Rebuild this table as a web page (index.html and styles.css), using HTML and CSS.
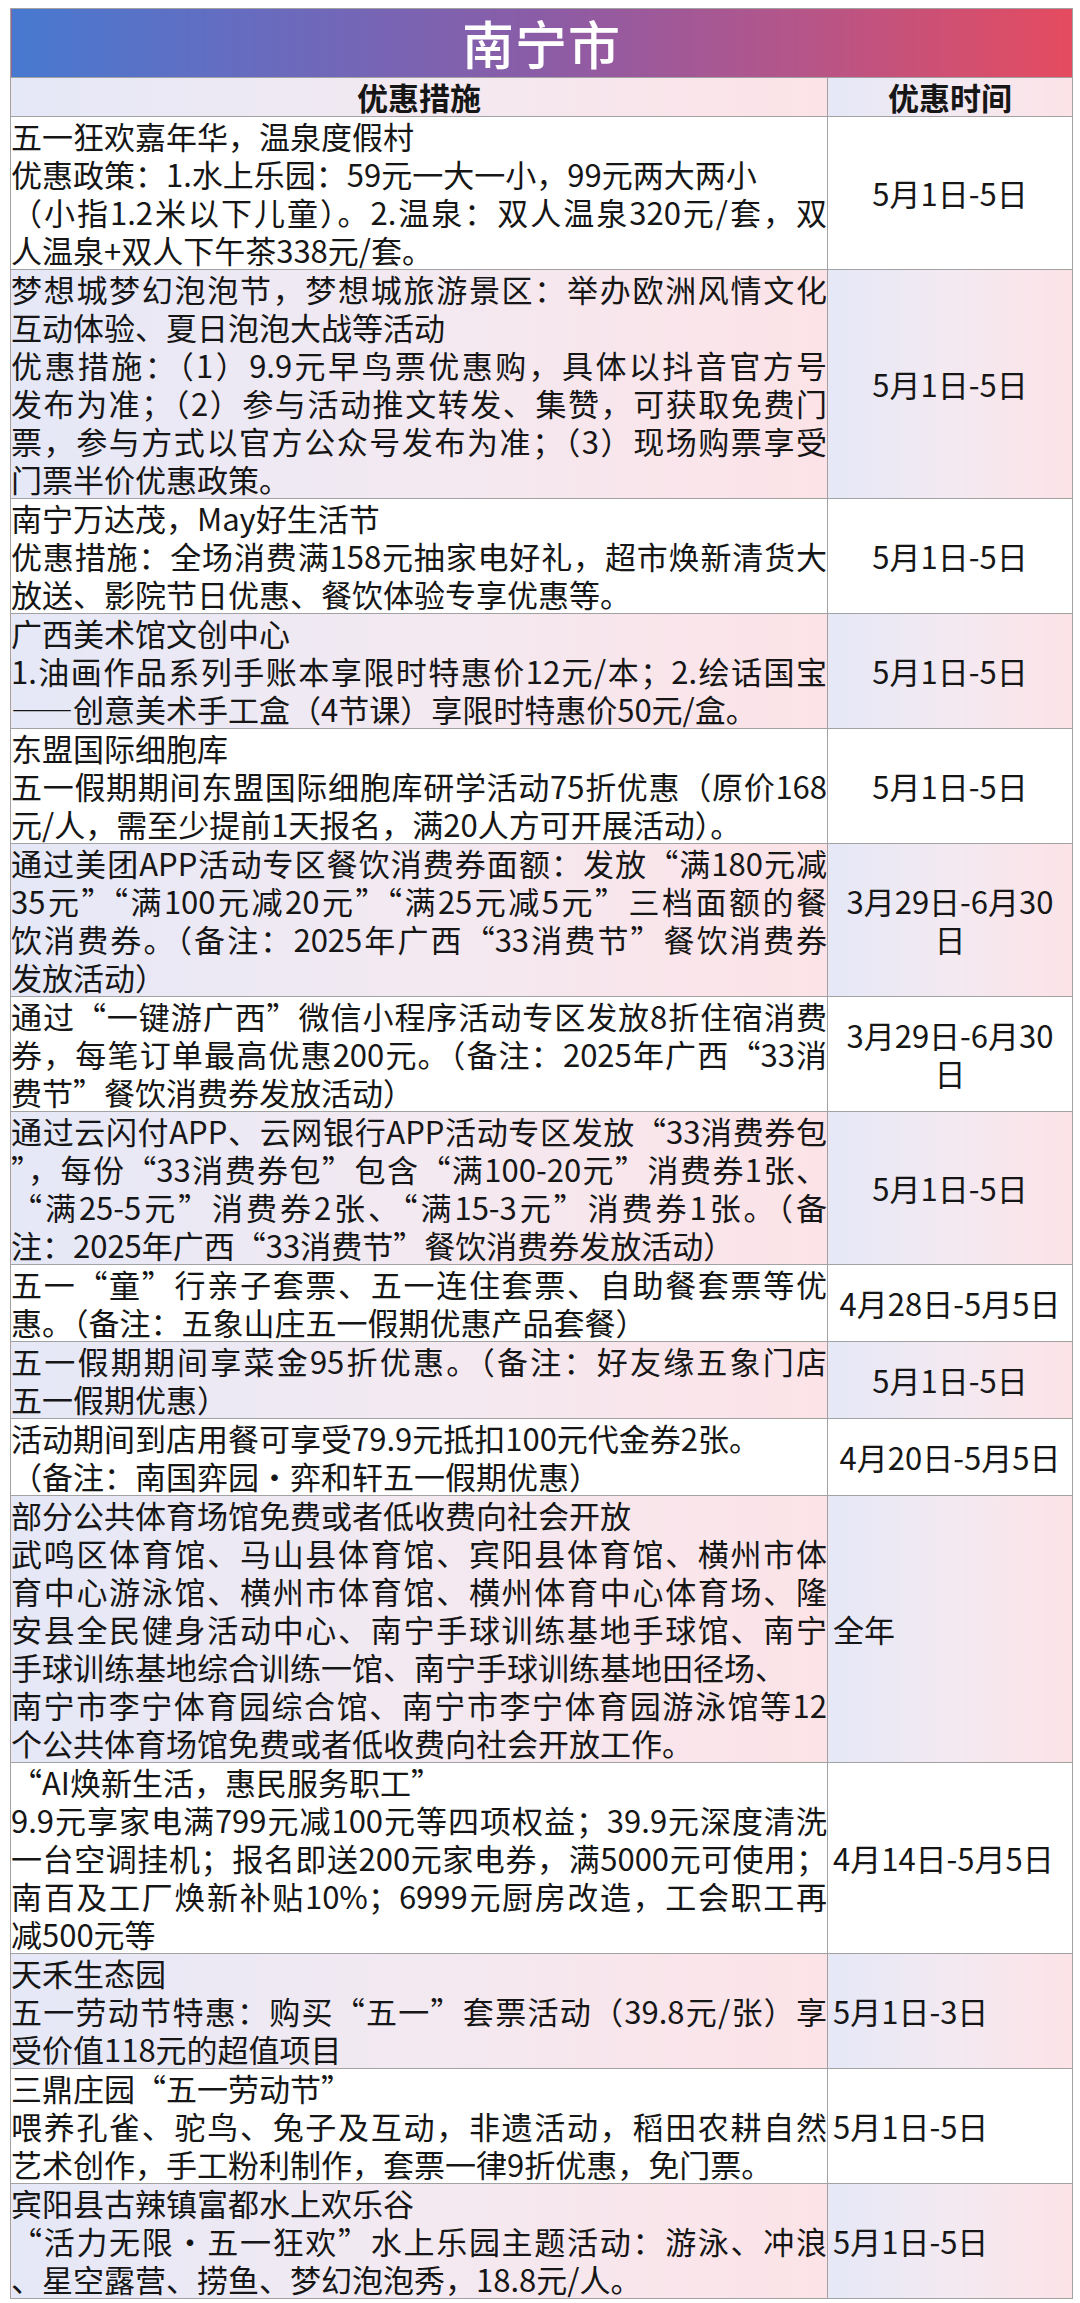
FILE: index.html
```html
<!DOCTYPE html>
<html lang="zh-CN">
<head>
<meta charset="utf-8">
<title>南宁市</title>
<link rel="stylesheet" href="styles.css">
</head>
<body>
<table class="deals">
  <colgroup><col class="c1"><col class="c2"></colgroup>
  <thead>
    <tr><th class="title" colspan="2">南宁市</th></tr>
    <tr class="alt"><th class="head">优惠措施</th><th class="head">优惠时间</th></tr>
  </thead>
  <tbody>
    <tr>
      <td class="desc">
        <span class="ln">五一狂欢嘉年华，温泉度假村</span>
        <span class="ln">优惠政策：1.水上乐园：59元一大一小，99元两大两小</span>
        <span class="ln j">（小指1.2米以下儿童）。2.温泉：双人温泉320元/套，双</span>
        <span class="ln">人温泉+双人下午茶338元/套。</span>
      </td>
      <td class="date">5月1日-5日</td>
    </tr>
    <tr class="alt">
      <td class="desc">
        <span class="ln j">梦想城梦幻泡泡节，梦想城旅游景区：举办欧洲风情文化</span>
        <span class="ln">互动体验、夏日泡泡大战等活动</span>
        <span class="ln j">优惠措施：（1）9.9元早鸟票优惠购，具体以抖音官方号</span>
        <span class="ln j">发布为准；（2）参与活动推文转发、集赞，可获取免费门</span>
        <span class="ln j">票，参与方式以官方公众号发布为准；（3）现场购票享受</span>
        <span class="ln">门票半价优惠政策。</span>
      </td>
      <td class="date">5月1日-5日</td>
    </tr>
    <tr>
      <td class="desc">
        <span class="ln">南宁万达茂，May好生活节</span>
        <span class="ln j">优惠措施：全场消费满158元抽家电好礼，超市焕新清货大</span>
        <span class="ln">放送、影院节日优惠、餐饮体验专享优惠等。</span>
      </td>
      <td class="date">5月1日-5日</td>
    </tr>
    <tr class="alt">
      <td class="desc">
        <span class="ln">广西美术馆文创中心</span>
        <span class="ln j">1.油画作品系列手账本享限时特惠价12元/本；2.绘话国宝</span>
        <span class="ln">——创意美术手工盒（4节课）享限时特惠价50元/盒。</span>
      </td>
      <td class="date">5月1日-5日</td>
    </tr>
    <tr>
      <td class="desc">
        <span class="ln">东盟国际细胞库</span>
        <span class="ln j">五一假期期间东盟国际细胞库研学活动75折优惠（原价168</span>
        <span class="ln">元/人，需至少提前1天报名，满20人方可开展活动）。</span>
      </td>
      <td class="date">5月1日-5日</td>
    </tr>
    <tr class="alt">
      <td class="desc">
        <span class="ln j">通过美团APP活动专区餐饮消费券面额：发放“满180元减</span>
        <span class="ln j">35元”“满100元减20元”“满25元减5元”三档面额的餐</span>
        <span class="ln j">饮消费券。（备注：2025年广西“33消费节”餐饮消费券</span>
        <span class="ln">发放活动）</span>
      </td>
      <td class="date">3月29日-6月30<br>日</td>
    </tr>
    <tr>
      <td class="desc">
        <span class="ln j">通过“一键游广西”微信小程序活动专区发放8折住宿消费</span>
        <span class="ln j">券，每笔订单最高优惠200元。（备注：2025年广西“33消</span>
        <span class="ln">费节”餐饮消费券发放活动）</span>
      </td>
      <td class="date">3月29日-6月30<br>日</td>
    </tr>
    <tr class="alt">
      <td class="desc">
        <span class="ln j">通过云闪付APP、云网银行APP活动专区发放“33消费券包</span>
        <span class="ln j">”，每份“33消费券包”包含“满100-20元”消费券1张、</span>
        <span class="ln j">“满25-5元”消费券2张、“满15-3元”消费券1张。（备</span>
        <span class="ln">注：2025年广西“33消费节”餐饮消费券发放活动）</span>
      </td>
      <td class="date">5月1日-5日</td>
    </tr>
    <tr>
      <td class="desc">
        <span class="ln j">五一“童”行亲子套票、五一连住套票、自助餐套票等优</span>
        <span class="ln">惠。（备注：五象山庄五一假期优惠产品套餐）</span>
      </td>
      <td class="date">4月28日-5月5日</td>
    </tr>
    <tr class="alt">
      <td class="desc">
        <span class="ln j">五一假期期间享菜金95折优惠。（备注：好友缘五象门店</span>
        <span class="ln">五一假期优惠）</span>
      </td>
      <td class="date">5月1日-5日</td>
    </tr>
    <tr>
      <td class="desc">
        <span class="ln">活动期间到店用餐可享受79.9元抵扣100元代金券2张。</span>
        <span class="ln">（备注：南国弈园·弈和轩五一假期优惠）</span>
      </td>
      <td class="date">4月20日-5月5日</td>
    </tr>
    <tr class="alt">
      <td class="desc">
        <span class="ln">部分公共体育场馆免费或者低收费向社会开放</span>
        <span class="ln j">武鸣区体育馆、马山县体育馆、宾阳县体育馆、横州市体</span>
        <span class="ln j">育中心游泳馆、横州市体育馆、横州体育中心体育场、隆</span>
        <span class="ln j">安县全民健身活动中心、南宁手球训练基地手球馆、南宁</span>
        <span class="ln">手球训练基地综合训练一馆、南宁手球训练基地田径场、</span>
        <span class="ln j">南宁市李宁体育园综合馆、南宁市李宁体育园游泳馆等12</span>
        <span class="ln">个公共体育场馆免费或者低收费向社会开放工作。</span>
      </td>
      <td class="date left">全年</td>
    </tr>
    <tr>
      <td class="desc">
        <span class="ln">“AI焕新生活，惠民服务职工”</span>
        <span class="ln j">9.9元享家电满799元减100元等四项权益；39.9元深度清洗</span>
        <span class="ln j">一台空调挂机；报名即送200元家电券，满5000元可使用；</span>
        <span class="ln j">南百及工厂焕新补贴10%；6999元厨房改造，工会职工再</span>
        <span class="ln">减500元等</span>
      </td>
      <td class="date left">4月14日-5月5日</td>
    </tr>
    <tr class="alt">
      <td class="desc">
        <span class="ln">天禾生态园</span>
        <span class="ln j">五一劳动节特惠：购买“五一”套票活动（39.8元/张）享</span>
        <span class="ln">受价值118元的超值项目</span>
      </td>
      <td class="date left">5月1日-3日</td>
    </tr>
    <tr>
      <td class="desc">
        <span class="ln">三鼎庄园“五一劳动节”</span>
        <span class="ln j">喂养孔雀、驼鸟、兔子及互动，非遗活动，稻田农耕自然</span>
        <span class="ln">艺术创作，手工粉利制作，套票一律9折优惠，免门票。</span>
      </td>
      <td class="date left">5月1日-5日</td>
    </tr>
    <tr class="alt">
      <td class="desc">
        <span class="ln">宾阳县古辣镇富都水上欢乐谷</span>
        <span class="ln j">“活力无限·五一狂欢”水上乐园主题活动：游泳、冲浪</span>
        <span class="ln">、星空露营、捞鱼、梦幻泡泡秀，18.8元/人。</span>
      </td>
      <td class="date left">5月1日-5日</td>
    </tr>
  </tbody>
</table>
</body>
</html>
```
FILE: styles.css
```css
html, body {
  margin: 0;
  padding: 0;
  background: #ffffff;
}

body {
  padding: 8px 0 0 10px;
  font-family: "Noto Sans CJK SC", "Noto Sans", sans-serif;
  color: #161616;
}

.deals {
  border-collapse: collapse;
  table-layout: fixed;
  width: 1062px;
  border: 1px solid #a2a2a2;
}

.c1 { width: 817px; }
.c2 { width: 245px; }

.deals th,
.deals td {
  border: 1px solid #a2a2a2;
  padding: 0;
}

.title {
  height: 68px;
  background: linear-gradient(to right, #4779d0 0%, #6a6abd 25%, #8b5ca6 50%, #b65588 75%, #e54b5f 100%);
  color: #ffffff;
  font-size: 52px;
  font-weight: 500;
  line-height: 68px;
  text-align: center;
  letter-spacing: 1px;
}

.head {
  font-size: 31px;
  font-weight: 700;
  line-height: 38px;
  text-align: center;
}

.alt th,
.alt td {
  background: linear-gradient(to right, #e5e8f7 0%, #f3e9f1 50%, #fce3e7 100%);
}

.desc {
  padding: 0 3px 0 3px;
  font-size: 31px;
  line-height: 38px;
  vertical-align: top;
}

.ln {
  display: block;
  text-align: left;
}

.ln.j {
  text-align: justify;
  text-align-last: justify;
}

.date {
  font-size: 31px;
  line-height: 38px;
  text-align: center;
  vertical-align: middle;
}

.date.left {
  text-align: left;
  padding-left: 5px;
}
```
